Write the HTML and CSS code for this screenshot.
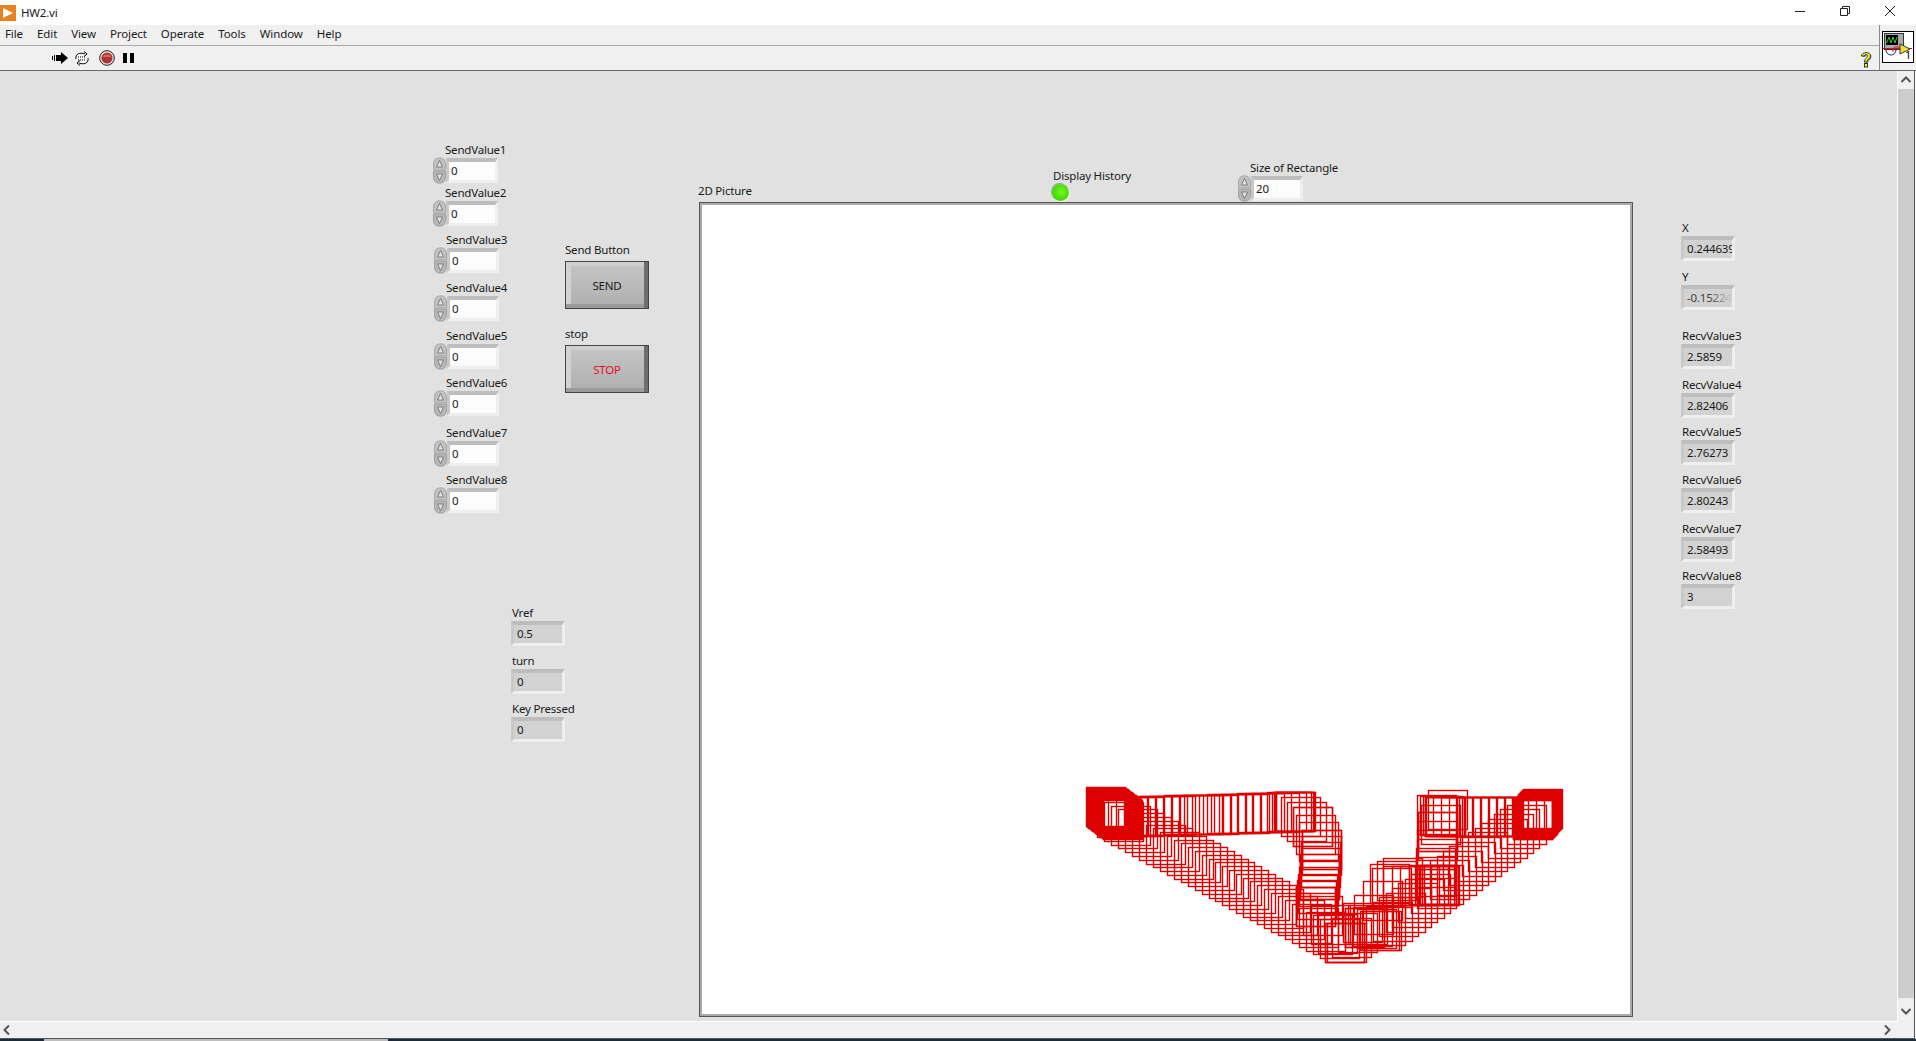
FILE: index.html
```html
<!DOCTYPE html>
<html lang="en">
<head>
    <meta charset="UTF-8">
    <title>HW2.vi</title>
    <link rel="stylesheet" href="styles.css">
</head>
<body>
    <svg class="defs" width="0" height="0">
        <symbol id="spin" viewBox="0 0 13 27">
            <path d="M.5 13V7Q.5 3 3 1.500 6.500 0 10 1.500 12.500 3 12.500 7v6Z" fill="#c0c0c0" stroke="#aaa"/>
            <path d="M.5 14v6Q.5 24 3 25.500q3.500 1.500 7 0Q12.500 24 12.500 20v-6Z" fill="#b6b6b6" stroke="#a0a0a0"/>
            <path d="M6.500 3.500 3.500 10h6Z" fill="#e4e4e4" stroke="#6a6a6a" stroke-width=".8"/>
            <path d="M6.500 23.500 3.500 17h6Z" fill="#e4e4e4" stroke="#6a6a6a" stroke-width=".8"/>
        </symbol>
    </svg>

    <div id="titlebar">
        <svg class="app-icon" width="16" height="16" viewBox="0 0 16 16">
            <rect width="16" height="16" fill="#e8821e"/>
            <path d="M3 3 13 8 3 13Z" fill="#fff"/>
        </svg>
        <span class="title">HW2.vi</span>
        <div class="win-buttons">
            <svg width="12" height="12" viewBox="0 0 12 12"><path d="M1 6.500h10" stroke="#222"/></svg>
            <svg width="12" height="12" viewBox="0 0 12 12" fill="none" stroke="#222"><path d="M1.500 3.500h7v7h-7zM3.500 3.500v-2h7v7h-2"/></svg>
            <svg width="12" height="12" viewBox="0 0 12 12"><path d="M1 1 11 11M11 1 1 11" stroke="#222"/></svg>
        </div>
    </div>

    <div id="header">
        <div class="bars">
            <ul class="menu">
                <li>File</li><li>Edit</li><li>View</li><li>Project</li>
                <li>Operate</li><li>Tools</li><li>Window</li><li>Help</li>
            </ul>
            <div class="toolbar">
                <svg class="tool run" width="16" height="12" viewBox="0 0 16 12">
                    <path d="M0 4h1v4H0zM2 3h1v6H2zM4 3h5V0l7 6-7 6V9H4z" fill="#000"/>
                </svg>
                <svg class="tool loop" width="16" height="15" viewBox="0 0 16 15" fill="none" stroke="#000">
                    <path d="M2 8C1 3 6 1 11 3M10 .5 13 3l-3 2.500" fill="#fff"/>
                    <path d="M14 7c1 5-4 7-9 5M6 9.500 3 12l3 2.500" fill="#fff"/>
                    <path d="M4 6h8M4 9h8" stroke-dasharray="1 1"/>
                </svg>
                <svg class="tool abort" width="16" height="16" viewBox="0 0 16 16">
                    <circle cx="8" cy="8" r="7.300" fill="#f4f4f4" stroke="#000" stroke-width=".9"/>
                    <circle cx="8" cy="8" r="5.600" fill="#b53030"/>
                    <path d="M3.400 7a5 4 0 0 1 9.200 0Z" fill="#cf6a6a"/>
                </svg>
                <div class="pause"><i></i><i></i></div>
                <svg class="help" width="13" height="18" viewBox="0 0 13 18">
                    <path d="M2.500 6C2.500 2 11.500 1 11.500 6c0 3-3.500 3-3.500 6H5.500c0-4 3-4 3-6 0-2-3-2-3 0Z" fill="#888"/>
                    <path d="M1.500 5C1.500 1 10.500 0 10.500 5c0 3-3.500 3-3.500 6H4.500c0-4 3-4 3-6 0-2-3-2-3 0Z" fill="#f6ee3a" stroke="#222" stroke-width=".9"/>
                    <rect x="4.500" y="12.500" width="3" height="3.500" fill="#f6ee3a" stroke="#222" stroke-width=".9"/>
                </svg>
            </div>
        </div>
        <div class="conn-wrap">
            <svg class="conn" width="32" height="32" viewBox="0 0 32 32">
                <rect x=".5" y=".5" width="31" height="31" fill="#fff" stroke="#000"/>
                <rect x="2.500" y="2.500" width="19" height="16" fill="#aaa" stroke="#333"/>
                <rect x="4" y="4" width="12" height="10" fill="#000"/>
                <path d="M4.500 12 7 6l2 6 2-6 2 6 2-6" fill="none" stroke="#2ecc2e"/>
                <path d="M1 17.500H30" stroke="#d11"/>
                <path d="M4 19a5 5 0 0 0 10 0" fill="none" stroke="#12a"/>
                <path d="M11 21a3.500 3.500 0 0 1 7-3" fill="none" stroke="#d11"/>
                <path d="M18 13 28 18 18 23Z" fill="#f2e22e" stroke="#333"/>
                <text x="23" y="28" class="conn-num">1</text>
            </svg>
        </div>
    </div>

    <div id="middle">
        <div id="panel">
            <div class="ctl sv1"><label>SendValue1</label><div class="num"><svg class="spin"><use href="#spin"/></svg><div class="box">0</div></div></div>
            <div class="ctl sv2"><label>SendValue2</label><div class="num"><svg class="spin"><use href="#spin"/></svg><div class="box">0</div></div></div>
            <div class="ctl sv3"><label>SendValue3</label><div class="num"><svg class="spin"><use href="#spin"/></svg><div class="box">0</div></div></div>
            <div class="ctl sv4"><label>SendValue4</label><div class="num"><svg class="spin"><use href="#spin"/></svg><div class="box">0</div></div></div>
            <div class="ctl sv5"><label>SendValue5</label><div class="num"><svg class="spin"><use href="#spin"/></svg><div class="box">0</div></div></div>
            <div class="ctl sv6"><label>SendValue6</label><div class="num"><svg class="spin"><use href="#spin"/></svg><div class="box">0</div></div></div>
            <div class="ctl sv7"><label>SendValue7</label><div class="num"><svg class="spin"><use href="#spin"/></svg><div class="box">0</div></div></div>
            <div class="ctl sv8"><label>SendValue8</label><div class="num"><svg class="spin"><use href="#spin"/></svg><div class="box">0</div></div></div>
            <div class="ctl size"><label>Size of Rectangle</label><div class="num"><svg class="spin"><use href="#spin"/></svg><div class="box">20</div></div></div>

            <div class="ctl send"><label>Send Button</label><div class="btn"><span>SEND</span></div></div>
            <div class="ctl stop"><label>stop</label><div class="btn btn-stop"><span>STOP</span></div></div>

            <div class="ctl vref"><label>Vref</label><div class="box ind">0.5</div></div>
            <div class="ctl turn"><label>turn</label><div class="box ind">0</div></div>
            <div class="ctl key"><label>Key Pressed</label><div class="box ind">0</div></div>

            <div class="ctl val-x"><label>X</label><div class="box ind">0.244639</div></div>
            <div class="ctl val-y"><label>Y</label><div class="box ind faded">-0.15224</div></div>
            <div class="ctl rv3"><label>RecvValue3</label><div class="box ind">2.5859</div></div>
            <div class="ctl rv4"><label>RecvValue4</label><div class="box ind">2.82406</div></div>
            <div class="ctl rv5"><label>RecvValue5</label><div class="box ind">2.76273</div></div>
            <div class="ctl rv6"><label>RecvValue6</label><div class="box ind">2.80243</div></div>
            <div class="ctl rv7"><label>RecvValue7</label><div class="box ind">2.58493</div></div>
            <div class="ctl rv8"><label>RecvValue8</label><div class="box ind">3</div></div>

            <div class="ctl hist"><label>Display History</label><div class="led"></div></div>
            <div class="ctl pic-label"><label>2D Picture</label></div>
            <div id="picture">
                <svg id="plot" width="932" height="813" viewBox="700 203 932 813"></svg>
            </div>
        </div>
        <div class="vscroll">
            <svg class="arrow" width="16" height="18" viewBox="0 0 16 18"><path d="M3.500 11 8 6.500 12.500 11" fill="none" stroke="#555" stroke-width="2"/></svg>
            <div class="vthumb"></div>
            <svg class="arrow" width="16" height="24" viewBox="0 0 16 24"><path d="M3.500 11 8 15.500 12.500 11" fill="none" stroke="#555" stroke-width="2"/></svg>
        </div>
    </div>

    <div class="hscroll">
        <svg width="16" height="16" viewBox="0 0 16 16"><path d="M9 3.500 4.500 8 9 12.500" fill="none" stroke="#555" stroke-width="2"/></svg>
        <svg class="hs-right" width="16" height="16" viewBox="0 0 16 16"><path d="M6 3.500 10.500 8 6 12.500" fill="none" stroke="#555" stroke-width="2"/></svg>
    </div>
    <div class="taskstrip"><i></i></div>

    <script src="draw.js"></script>
</body>
</html>
```
FILE: styles.css
```css
* {
    box-sizing: border-box;
}
html, body {
    margin: 0;
    height: 100%;
    overflow: hidden;
}
body {
    width: 1916px;
    height: 1041px;
    font-family: "Noto Sans", "Open Sans", sans-serif;
    font-size: 11.5px;
    letter-spacing: -0.2px;
    color: #1a1a1a;
    background-color: #fff;
    display: flex;
    flex-direction: column;
}
.defs {
    position: absolute;
}

/* window chrome */
#titlebar {
    height: 25px;
    display: flex;
    align-items: center;
    background-color: #fff;
    flex: none;
}
.title {
    margin-left: 5px;
}
.win-buttons {
    margin-left: auto;
    display: flex;
    gap: 33px;
    padding-right: 20px;
    margin-top: -4px;
}
#header {
    height: 46px;
    display: flex;
    flex: none;
    background-color: #f0f0f0;
    border-bottom: 1px solid #6a6a6a;
}
.bars {
    flex: 1;
    display: flex;
    flex-direction: column;
}
.menu {
    list-style: none;
    margin: 0;
    padding: 0 0 3px 5px;
    height: 21px;
    display: flex;
    align-items: center;
    gap: 14px;
    letter-spacing: -0.1px;
    border-bottom: 1px solid #a8a8a8;
}
.toolbar {
    flex: 1;
    display: flex;
    align-items: center;
    padding-left: 52px;
}
.tool {
    flex: none;
}
.loop {
    margin-left: 6px;
}
.abort {
    margin-left: 9px;
}
.pause {
    margin-left: 8px;
    display: flex;
    gap: 3px;
}
.pause i {
    width: 4px;
    height: 10px;
    background-color: #000;
}
.help {
    margin-left: auto;
    margin-right: 6px;
    margin-top: 3px;
}
.conn-wrap {
    width: 37px;
    border-left: 1px solid #8a8a8a;
    padding: 6px 0 0 2px;
}
.conn-num {
    font-size: 11px;
    fill: #000;
}

/* front panel */
#middle {
    flex: 1;
    display: flex;
    min-height: 0;
    padding-right: 2px;
}
#panel {
    position: relative;
    flex: 1;
    background-color: #e1e1e1;
    border-right: 1px solid #fff;
    border-bottom: 1px solid #fff;
}
.vscroll {
    width: 16px;
    display: flex;
    flex-direction: column;
    background-color: #f0f0f0;
    box-shadow: 1px 0 0 #555;
}
.arrow {
    flex: none;
}
.vthumb {
    flex: 1;
    background-color: #cdcdcd;
}
.hscroll {
    height: 17px;
    flex: none;
    display: flex;
    align-items: center;
    padding-right: 19px;
    background-color: #f0f0f0;
    border-bottom: 1px solid #555;
    margin-right: 1px;
    border-right: 1px solid #555;
}
.hs-right {
    margin-left: auto;
}
.taskstrip {
    height: 2px;
    flex: none;
    background-color: #1c2b3a;
}
.taskstrip i {
    display: block;
    height: 2px;
    margin-left: 44px;
    width: 344px;
    background-color: #bdbdbd;
}

/* controls on the panel */
.ctl {
    position: absolute;
}
.ctl label {
    display: block;
    height: 16px;
    line-height: 15px;
    white-space: nowrap;
}
.num {
    display: flex;
    margin-left: -12px;
}
.spin {
    width: 13px;
    height: 27px;
    margin-top: -1px;
    flex: none;
}
.box {
    width: 52px;
    height: 25px;
    line-height: 17px;
    padding-left: 2px;
    overflow: hidden;
    white-space: nowrap;
    background-color: #fcfcfc;
    border-style: solid;
    border-width: 4px 3px 3px 3px;
    border-color: #bdbdbd #efefef #efefef #c8c8c8;
}
.ind {
    width: 54px;
    margin-left: -1px;
    background-color: #d2d2d2;
    padding-left: 3px;
}
.faded {
    position: relative;
    color: #444;
}
.faded::after {
    content: "";
    position: absolute;
    right: 0;
    top: 0;
    bottom: 0;
    width: 22px;
    background-image: linear-gradient(to right, rgba(210, 210, 210, 0), #d2d2d2);
}
.btn {
    width: 84px;
    height: 48px;
    margin-top: 3px;
    border: 1px solid #444;
    background-color: #bbb;
    background-image: linear-gradient(#c6c6c6, #aeaeae);
    display: flex;
    align-items: center;
    justify-content: center;
    box-shadow: inset -4px 0 0 #6e6e6e, inset 0 -4px 0 #9a9a9a, inset 5px 0 0 #d2d2d2, inset 0 4px 0 #cfcfcf;
}
.btn-stop {
    color: #e8101c;
}
.led {
    width: 17px;
    height: 17px;
    margin-left: -1px;
    border-radius: 50%;
    background: radial-gradient(circle at 55% 45%, #74f620, #3fd400 75%);
    box-shadow: -1px -1px 0 #9a9a9a, 1px 1px 0 #f4f4f4;
}
#picture {
    position: absolute;
    left: 699px;
    top: 131px;
    width: 934px;
    height: 815px;
    background-color: #fff;
    border: 1px solid #555;
    box-shadow: inset -2px -2px 0 #aaa, inset 2px 2px 0 #aaa;
}
#plot {
    display: block;
}

.sv1 { left: 445px; top: 71px; }
.sv2 { left: 445px; top: 114px; }
.sv3 { left: 446px; top: 161px; }
.sv4 { left: 446px; top: 209px; }
.sv5 { left: 446px; top: 257px; }
.sv6 { left: 446px; top: 304px; }
.sv7 { left: 446px; top: 354px; }
.sv8 { left: 446px; top: 401px; }
.size { left: 1250px; top: 89px; }
.send { left: 565px; top: 171px; }
.stop { left: 565px; top: 255px; }
.vref { left: 512px; top: 534px; }
.turn { left: 512px; top: 582px; }
.key { left: 512px; top: 630px; }
.val-x { left: 1682px; top: 149px; }
.val-y { left: 1682px; top: 198px; }
.rv3 { left: 1682px; top: 257px; }
.rv4 { left: 1682px; top: 306px; }
.rv5 { left: 1682px; top: 353px; }
.rv6 { left: 1682px; top: 401px; }
.rv7 { left: 1682px; top: 450px; }
.rv8 { left: 1682px; top: 497px; }
.hist { left: 1053px; top: 97px; }
.pic-label { left: 698px; top: 112px; }
```
FILE: draw.js
```js
// rectangles left behind by the robot position, [x0, y0, x1, y1, count]
const tracks = [
    // left block
    [1086, 787, 1103, 800, 18],
    // top run to the right
    [1108, 797, 1180, 795, 10],
    [1184, 795, 1275, 792, 13],
    [1272, 792, 1276, 792, 3],
    // curve down
    [1275, 792, 1293, 807, 4],
    [1293, 807, 1302, 830, 4],
    [1302, 830, 1300, 860, 6],
    [1300, 860, 1296, 887, 5],
    // lower diagonal
    [1097, 798, 1327, 923, 34],
    // bottom clusters
    [1296, 887, 1325, 923, 5],
    [1325, 923, 1345, 908, 4],
    [1343, 903, 1362, 911, 5],
    [1345, 908, 1372, 868, 4],
    [1370, 864, 1383, 858, 3],
    [1383, 866, 1417, 865, 5],
    [1417, 865, 1420, 866, 3],
    // back up to the right cluster
    [1415, 866, 1418, 812, 7],
    [1418, 812, 1428, 790, 4],
    [1417, 795, 1426, 797, 4],
    // top run from the right
    [1425, 797, 1513, 797, 12],
    // right diagonal
    [1360, 911, 1513, 800, 25],
    // right block
    [1513, 800, 1523, 789, 12]
];

const plot = document.getElementById("plot");
const svgNS = "http://www.w3.org/2000/svg";

tracks.forEach(track => {
    const [x0, y0, x1, y1, count] = track;
    for (let i = 0; i < count; i++) {
        const t = count > 1 ? i / (count - 1) : 0;
        const rect = document.createElementNS(svgNS, "rect");
        rect.setAttribute("x", Math.round(x0 + (x1 - x0) * t) + 0.5);
        rect.setAttribute("y", Math.round(y0 + (y1 - y0) * t) + 0.5);
        rect.setAttribute("width", 39);
        rect.setAttribute("height", 39);
        rect.setAttribute("fill", "none");
        rect.setAttribute("stroke", "#de0000");
        rect.setAttribute("stroke-width", 1.4);
        plot.appendChild(rect);
    }
});
```
